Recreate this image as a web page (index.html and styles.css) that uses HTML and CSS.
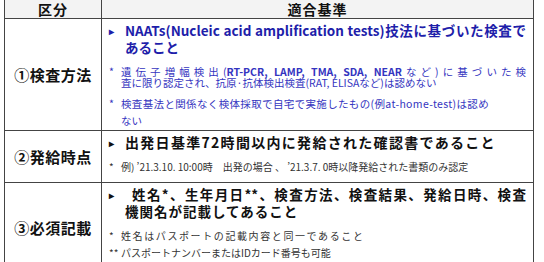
FILE: index.html
```html
<!DOCTYPE html>
<html lang="ja">
<head>
<meta charset="utf-8">
<link rel="stylesheet" href="styles.css">
</head>
<body>
<div class="grid">
  <div class="cell head left">区分</div>
  <div class="cell head right">適合基準</div>

  <div class="cell label left r1">①検査方法</div>
  <div class="cell body right r1">
    <div class="item blue">
      <span class="bul">▸</span>
      <div class="txt">
        <span class="jl">NAATs(Nucleic acid amplification tests)技法に基づいた検査で</span>
        <span class="ln">あること</span>
      </div>
    </div>
    <div class="note bluenote n1">
      <span class="star">*</span>
      <div class="txt">
        <span class="jl">遺伝子増幅検出(<b>RT-PCR, LAMP, TMA, SDA, NEAR</b>など)に基づいた検</span>
        <span class="ln">査に限り認定され、抗原·抗体検出検査(RAT, ELISAなど)は認めない</span>
      </div>
    </div>
    <div class="note bluenote n2">
      <span class="star">*</span>
      <div class="txt">
        <span class="ln loose">検査基法と関係なく検体採取で自宅で実施したもの(例at-home-test)は認め</span>
        <span class="ln">ない</span>
      </div>
    </div>
  </div>

  <div class="cell label left r2">②発給時点</div>
  <div class="cell body right r2">
    <div class="item black wide">
      <span class="bul">▸</span>
      <div class="txt"><span class="ln">出発日基準72時間以内に発給された確認書であること</span></div>
    </div>
    <div class="note graynote n3">
      <span class="star">*</span>
      <div class="txt"><span class="ln">例) ’21.3.10. 10:00時　出発の場合 、 ’21.3.7. 0時以降発給された書類のみ認定</span></div>
    </div>
  </div>

  <div class="cell label left r3">③必須記載</div>
  <div class="cell body right r3">
    <div class="item black">
      <span class="bul">▸</span>
      <div class="txt">
        <span class="jl indent">姓名*、生年月日**、検査方法、検査結果、発給日時、検査</span>
        <span class="ln second">機関名が記載してあること</span>
      </div>
    </div>
    <div class="note graynote n4">
      <span class="star">*</span>
      <div class="txt"><span class="ln spaced">姓名はパスポートの記載内容と同一であること</span></div>
    </div>
    <div class="note graynote n5">
      <span class="star">**</span>
      <div class="txt"><span class="ln">パスポートナンバーまたはIDカード番号も可能</span></div>
    </div>
  </div>
</div>
</body>
</html>
```

FILE: styles.css
```css
html, body {
  margin: 0;
  padding: 0;
  background: #ffffff;
}
body {
  font-family: "Noto Sans CJK JP", "Noto Sans", sans-serif;
  color: #111;
  overflow: hidden;
}
.grid {
  display: grid;
  grid-template-columns: 97px 1fr;
  grid-template-rows: 19px 112px 52px 90px;
  width: 530px;
  box-sizing: border-box;
  margin: -1px 0 0 4px;
  border: 1px solid #444;
  border-bottom: none;
}
.cell {
  box-sizing: border-box;
  border-bottom: 1px solid #444;
}
.left {
  border-right: 1px solid #444;
}
.head {
  background: #f3f3f3;
  font-weight: 700;
  font-size: 14px;
  line-height: 18px;
  text-align: center;
  letter-spacing: 1px;
}
.label {
  display: flex;
  align-items: center;
  justify-content: center;
  font-weight: 700;
  font-size: 15px;
  letter-spacing: 0.5px;
  color: #111;
}
.body {
  padding: 3px 7px 0 7px;
}
.item {
  display: flex;
  font-weight: 700;
  font-size: 13.5px;
  line-height: 17px;
}
.bul {
  width: 16px;
  flex: none;
  font-size: 10px;
}
.txt {
  flex: 1;
  min-width: 0;
}
.jl {
  display: block;
  text-align: justify;
  text-align-last: justify;
  white-space: nowrap;
}
.ln {
  display: block;
  white-space: nowrap;
}
.indent {
  padding-left: 7px;
}
.second {
  letter-spacing: 1px;
}
.blue { color: #1e1eaa; }
.black { color: #111; }
.wide .ln { letter-spacing: 1.3px; font-size: 14px; }
.note {
  display: flex;
  font-size: 10.5px;
  line-height: 11px;
}
.note .star {
  width: 12px;
  flex: none;
}
.note b { font-weight: 700; }
.bluenote { color: #3434c0; }
.graynote { color: #333; font-size: 10px; }
.loose { letter-spacing: 0.35px; }
.n1 { margin-top: 10px; }
.n2 { margin-top: 7px; line-height: 17px; }
.n3 { margin-top: 10px; line-height: 12px; }
.n4 { margin-top: 7px; line-height: 17px; }
.n5 { line-height: 17px; }
.spaced { letter-spacing: 1.6px; }
```
